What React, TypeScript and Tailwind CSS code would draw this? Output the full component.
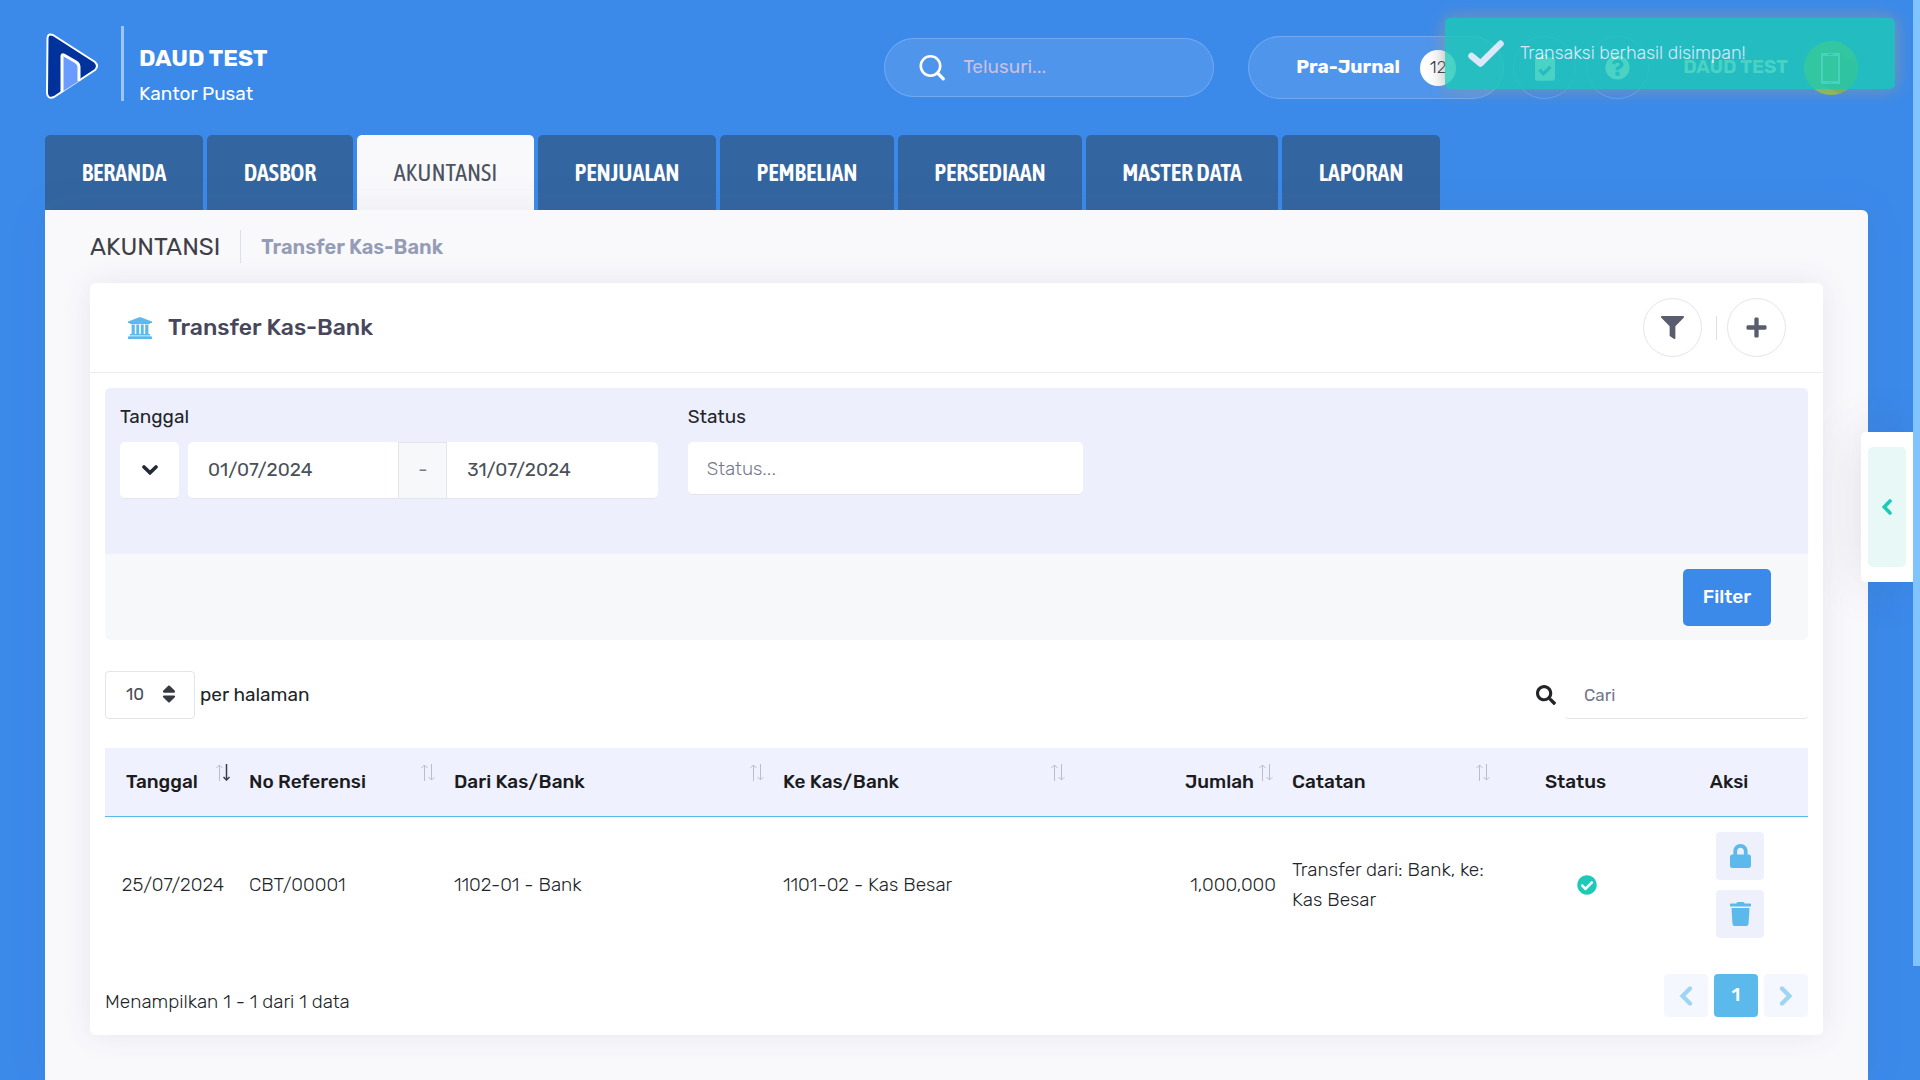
import React from "react";
import {
  FaCheckCircle,
  FaClipboardCheck,
  FaFilter,
  FaLock,
  FaPlus,
  FaQuestionCircle,
  FaSearch,
  FaSort,
  FaTrash,
} from "react-icons/fa";

const tabs = [
  { label: "BERANDA", width: "w-[158px]" },
  { label: "DASBOR", width: "w-[146px]" },
  { label: "AKUNTANSI", width: "w-[177px]", active: true },
  { label: "PENJUALAN", width: "w-[178px]" },
  { label: "PEMBELIAN", width: "w-[174px]" },
  { label: "PERSEDIAAN", width: "w-[184px]" },
  { label: "MASTER DATA", width: "w-[192px]" },
  { label: "LAPORAN", width: "w-[158px]" },
];

type Column = {
  label: string;
  width: string;
  align: string;
  sort?: "none" | "desc";
};

const columns: Column[] = [
  { label: "Tanggal", width: "w-[136px]", align: "text-center", sort: "desc" },
  { label: "No Referensi", width: "w-[205px]", align: "text-left", sort: "none" },
  { label: "Dari Kas/Bank", width: "w-[329px]", align: "text-left", sort: "none" },
  { label: "Ke Kas/Bank", width: "w-[301px]", align: "text-left", sort: "none" },
  { label: "Jumlah", width: "w-[208px]", align: "text-right", sort: "none" },
  { label: "Catatan", width: "w-[217px]", align: "text-left", sort: "none" },
  { label: "Status", width: "w-[171px]", align: "text-center" },
  { label: "Aksi", width: "w-[136px]", align: "text-center" },
];

function Logo() {
  return (
    <svg viewBox="0 0 54 68" className="mb-1 h-[68px] w-[54px]" aria-hidden="true">
      <path
        d="M2.500 6 Q3 1 8 3 L50 30 Q54 34 50 38 L9 65 Q2.500 67.500 2 61 Z"
        fill="#00329b"
        stroke="#fff"
        strokeWidth="2"
        strokeLinejoin="round"
      />
      <path d="M17 24 Q17 22 19 23 L31 30 Q34 32 34 35 L34 49 L17 60 Z" fill="#6a9bff" />
      <path
        d="M17 60 L17 24 Q17 22 19 23 L31 30 Q34 32 34 35 L34 49"
        fill="none"
        stroke="#fff"
        strokeWidth="3"
      />
    </svg>
  );
}

function SearchGlyph() {
  return (
    <svg viewBox="0 0 26 26" className="h-[26px] w-[26px]" fill="none" stroke="#fff" aria-hidden="true">
      <circle cx="11.5" cy="11" r="9.7" strokeWidth="2.6" />
      <path d="M18.5 18 L24.3 23.800" strokeWidth="3.2" strokeLinecap="round" />
    </svg>
  );
}

function BankGlyph() {
  return (
    <svg viewBox="0 0 24 22" className="h-[22px] w-6 text-[#5bb9ec]" fill="currentColor" aria-hidden="true">
      <path d="M12 0 L24 4.600 V6 H22.400 L21.800 7 H2.200 L1.600 6 H0 V4.600 Z" />
      <path d="M3.600 7.500 H6.800 V17 H3.600 Z M8.300 7.500 H11.200 V17 H8.300 Z M12.800 7.500 H15.700 V17 H12.800 Z M17.200 7.500 H20.400 V17 H17.200 Z" />
      <path d="M2.200 17 H21.800 L22.400 18.500 H1.600 Z M0.800 19.200 H23.200 L24 20 V22 H0 V20 Z" />
    </svg>
  );
}

function PhoneAvatar() {
  return (
    <svg viewBox="0 0 54 54" className="h-[54px] w-[54px]" aria-hidden="true">
      <clipPath id="avatar-clip">
        <circle cx="27" cy="27" r="27" />
      </clipPath>
      <g clipPath="url(#avatar-clip)">
        <rect width="54" height="54" fill="#8bc34a" />
        <path d="M36 12 L54 22 V54 H38 L17 43 Z" fill="#7cb342" />
      </g>
      <rect x="17" y="12" width="19" height="31" fill="#f1f8e9" />
      <rect x="19" y="15" width="15" height="25" fill="#8bc34a" />
      <path d="M24 13.5 H29" stroke="#689f38" strokeWidth="1" />
      <circle cx="26.500" cy="41.500" r="0.800" fill="#689f38" />
    </svg>
  );
}

function ToastCheck() {
  return (
    <svg viewBox="0 0 36 28" className="h-7 w-9 shrink-0" fill="none" stroke="#fff" aria-hidden="true">
      <path d="M3.500 16 L12.500 23.500 L32.500 3.800" strokeWidth="6.500" strokeLinecap="round" strokeLinejoin="round" />
    </svg>
  );
}

function DownGlyph() {
  return (
    <svg viewBox="0 0 16 10" className="h-[10px] w-4" fill="none" stroke="#242939" aria-hidden="true">
      <path d="M2 2 L8 7.800 L14 2" strokeWidth="3.600" strokeLinecap="round" />
    </svg>
  );
}

function PageChevron({ next }: { next?: boolean }) {
  return (
    <svg viewBox="0 0 14 20" className="h-5 w-[14px]" fill="none" stroke="currentColor" aria-hidden="true">
      <path d={next ? "M3 2.500 L10.500 10 L3 17.500" : "M11 2.500 L3.500 10 L11 17.500"} strokeWidth="4.200" strokeLinecap="round" />
    </svg>
  );
}

function SortArrows({ desc }: { desc: boolean }) {
  return (
    <svg viewBox="0 0 14 17" className="absolute top-4 right-[11px] h-[17px] w-[14px]" fill="none" aria-hidden="true">
      <g stroke="#bcbdc9">
        <path d="M3.500 1 V17" />
        <path d="M0.500 4 L3.500 1 L6.500 4" />
      </g>
      <g stroke={desc ? "#3b3c45" : "#bcbdc9"}>
        <path d="M10.500 0 V16" strokeWidth={desc ? 1.5 : 1} />
        <path d="M7.500 13 L10.500 16 L13.500 13" strokeWidth={desc ? 1.5 : 1} />
      </g>
    </svg>
  );
}

function Header() {
  return (
    <header className="flex h-[135px] items-center pr-[62px] pl-[45px] text-white">
      <Logo />
      <div className="mt-[26px] ml-[22px] h-[75px] w-[3px] self-start bg-white/50" />
      <div className="ml-[15px] flex flex-col gap-2 pt-4">
        <div className="text-[23px] leading-7 font-bold">DAUD TEST</div>
        <div className="text-[19px] leading-7">Kantor Pusat</div>
      </div>
      <label className="ml-auto flex h-[59px] w-[330px] items-center gap-[18px] rounded-full border border-white/20 bg-white/10 pl-[34px]">
        <SearchGlyph />
        <input
          aria-label="Telusuri"
          placeholder="Telusuri..."
          className="w-56 bg-transparent text-[19px] text-white outline-none placeholder:text-[#c9bfe3]"
        />
      </label>
      <button className="ml-[34px] flex h-[63px] w-[256px] items-center gap-5 rounded-full border border-white/20 bg-white/10 pl-[47px] text-[19px] font-bold">
        Pra-Jurnal
        <span className="flex h-9 w-9 items-center justify-center rounded-full bg-white text-[17px] font-light text-[#242939]">12</span>
      </button>
      <button aria-label="Tugas" className="ml-[9px] flex h-[63px] w-[63px] items-center justify-center rounded-full border border-white/20">
        <FaClipboardCheck className="h-[27px] w-5" />
      </button>
      <button aria-label="Bantuan" className="ml-[10px] flex h-[63px] w-[63px] items-center justify-center rounded-full border border-white/20">
        <FaQuestionCircle className="h-[25px] w-[25px]" />
      </button>
      <span className="ml-[34px] text-[19px] font-semibold">DAUD TEST</span>
      <button aria-label="Profil" className="ml-4">
        <PhoneAvatar />
      </button>
    </header>
  );
}

function Tabs() {
  return (
    <nav className="flex gap-1 pl-[45px] font-['Asap_Condensed','Open_Sans_Condensed','Roboto_Condensed',sans-serif] text-[24px]">
      {tabs.map((t) => (
        <a
          key={t.label}
          href="#"
          className={`${t.width} ${
            t.active ? "bg-[#f9f9fc] font-normal text-[#4d5360]" : "bg-[#3366a1] font-semibold text-white"
          } flex h-[75px] items-center justify-center rounded-t-[5px] whitespace-nowrap`}
        >
          {t.label}
        </a>
      ))}
    </nav>
  );
}

function FilterPanel() {
  const field =
    "bg-white border-b border-[#e2e5ec] text-[19px] text-[#495057] outline-none placeholder:font-light placeholder:text-[#74788d]";
  return (
    <form className="overflow-hidden rounded-[5px]" onSubmit={(e) => e.preventDefault()}>
      <div className="flex h-[166px] bg-[#edeffd] pt-[15px]">
        <fieldset className="w-1/3 min-w-0 px-[15px]">
          <legend className="mb-[11px] text-[19px] leading-7">Tanggal</legend>
          <div className="flex h-[57px]">
            <button aria-label="Pilih rentang" className="mr-[9px] flex w-[59px] shrink-0 items-center justify-center rounded-[5px] border-b border-[#e2e5ec] bg-white">
              <DownGlyph />
            </button>
            <input aria-label="Tanggal awal" defaultValue="01/07/2024" className={`${field} min-w-0 flex-1 rounded-l-[5px] px-5`} />
            <span className="flex w-[49px] shrink-0 items-center justify-center border border-[#e2e5ec] bg-[#f7f8fa] text-[19px] text-[#74788d]">-</span>
            <input aria-label="Tanggal akhir" defaultValue="31/07/2024" className={`${field} min-w-0 flex-1 rounded-r-[5px] px-5`} />
          </div>
        </fieldset>
        <div className="flex w-1/4 flex-col gap-[11px] px-[15px] text-[19px]">
          <label htmlFor="status" className="leading-7">Status</label>
          <input id="status" placeholder="Status..." className={`${field} h-[53px] w-full rounded-[5px] px-[19px]`} />
        </div>
      </div>
      <div className="flex h-[86px] items-center justify-end bg-[#f7f8fa] pr-[37px]">
        <button className="h-[57px] w-[88px] rounded-[5px] bg-[#3b8aea] text-[19px] font-medium text-white">Filter</button>
      </div>
    </form>
  );
}

function TransferTable() {
  return (
    <table className="mt-[29px] w-full table-fixed border-separate border-spacing-0 text-[19px] leading-[30px]">
      <thead>
        <tr>
          {columns.map((c) => (
            <th
              key={c.label}
              className={`${c.width} ${c.align} relative h-[69px] border-b border-[#5bb9ec] bg-[#eff1ff] pr-[30px] pl-2 font-medium whitespace-nowrap text-[#1c1c20]`}
            >
              {c.label}
              {c.sort && <SortArrows desc={c.sort === "desc"} />}
            </th>
          ))}
        </tr>
      </thead>
      <tbody>
        <tr className="h-[135px] font-light text-[#212529]">
          <td className="text-center">25/07/2024</td>
          <td className="px-2">CBT/00001</td>
          <td className="px-2">1102-01 - Bank</td>
          <td className="px-2">1101-02 - Kas Besar</td>
          <td className="px-2 text-right">1,000,000</td>
          <td className="px-2">Transfer dari: Bank, ke: Kas Besar</td>
          <td>
            <FaCheckCircle className="mx-auto h-5 w-5 text-[#1dc9b7]" />
          </td>
          <td>
            <div className="flex flex-col items-center gap-[10px] text-[#5bb9ec]">
              <button aria-label="Kunci" className="flex h-12 w-12 items-center justify-center rounded-[4px] bg-[#eef0fc]">
                <FaLock className="h-6 w-[21px]" />
              </button>
              <button aria-label="Hapus" className="flex h-12 w-12 items-center justify-center rounded-[4px] bg-[#eef0fc]">
                <FaTrash className="h-6 w-[21px]" />
              </button>
            </div>
          </td>
        </tr>
      </tbody>
    </table>
  );
}

function Card() {
  return (
    <section className="rounded-[6px] bg-white shadow-[0_0_30px_0_rgba(82,63,105,0.1)]">
      <div className="flex h-[90px] items-center border-b border-[#ebedf2] pr-[37px] pl-[38px] text-[#595d6e]">
        <BankGlyph />
        <h3 className="ml-4 text-[23px] font-medium text-[#48465b]">Transfer Kas-Bank</h3>
        <button aria-label="Filter" className="ml-auto flex h-[59px] w-[59px] items-center justify-center rounded-full border border-[#e2e5ec]">
          <FaFilter className="h-[23px] w-[23px]" />
        </button>
        <span className="mr-[10px] ml-[14px] h-6 w-px bg-[#dcdfe8]" />
        <button aria-label="Tambah" className="flex h-[59px] w-[59px] items-center justify-center rounded-full border border-[#e2e5ec]">
          <FaPlus className="h-[23px] w-[23px]" />
        </button>
      </div>
      <div className="px-[15px] pt-[15px] pb-[18px]">
        <FilterPanel />
        <div className="mt-[31px] flex h-12 items-center text-[19px]">
          <label className="flex items-center gap-[5px]">
            <span className="relative">
              <select className="h-12 w-[90px] appearance-none rounded-[4px] border border-[#e2e5ec] bg-white pl-5 text-[17px] text-[#495057]">
                <option>10</option>
              </select>
              <FaSort className="pointer-events-none absolute top-3 right-4 h-[22px] w-[20px] text-[#343a40]" />
            </span>
            per halaman
          </label>
          <label className="ml-auto flex items-center gap-[9px]">
            <FaSearch className="h-5 w-5" />
            <input
              aria-label="Cari"
              placeholder="Cari"
              className="h-12 w-[243px] rounded-[4px] border-b border-[#e2e5ec] px-[19px] text-[17px] outline-none placeholder:text-[#74788d]"
            />
          </label>
        </div>
        <TransferTable />
        <div className="mt-[22px] flex items-center justify-between">
          <p className="pt-3 text-[19px] leading-7 font-light">Menampilkan 1 - 1 dari 1 data</p>
          <div className="flex gap-[6px] text-[#9dd5f3]">
            <button aria-label="Sebelumnya" className="flex h-[43px] w-11 items-center justify-center rounded-[4px] bg-[#f4f7fe]">
              <PageChevron />
            </button>
            <button className="h-[43px] w-11 rounded-[4px] bg-[#5bb9ec] text-[19px] font-medium text-white">1</button>
            <button aria-label="Berikutnya" className="flex h-[43px] w-11 items-center justify-center rounded-[4px] bg-[#f4f7fe]">
              <PageChevron next />
            </button>
          </div>
        </div>
      </div>
    </section>
  );
}

export default function App() {
  return (
    <div className="relative flex min-h-screen flex-col overflow-hidden bg-[#3b8aea] font-[Rubik,Inter,sans-serif] text-[#212529]">
      <Header />
      <Tabs />
      <main className="mr-[52px] ml-[45px] flex-1 rounded-tr-[6px] bg-[#f9f9fc] px-[45px] pb-[45px] shadow-[0_0_40px_0_rgba(82,63,105,0.08)]">
        <div className="flex h-[73px] items-center">
          <h2 className="text-[24px] font-normal text-[#3f4047]">AKUNTANSI</h2>
          <span className="mx-5 h-[33px] w-px bg-[#dcdfee]" />
          <a href="#" className="text-[20px] font-semibold text-[#959cb6]">Transfer Kas-Bank</a>
        </div>
        <Card />
      </main>

      <div className="absolute top-[432px] right-[7px] flex h-[150px] w-[52px] items-center rounded-l-[5px] bg-white pl-[7px] shadow-[0_0_50px_0_rgba(82,63,105,0.15)]">
        <button aria-label="Buka panel" className="flex h-[120px] w-[38px] items-center justify-center rounded-[5px] bg-[#e7f8f6]">
          <svg viewBox="0 0 10 16" className="h-4 w-[10px]" fill="none" stroke="#1dc9b7" aria-hidden="true">
            <path d="M8 2 L2.300 8 L8 14" strokeWidth="3.600" strokeLinecap="round" />
          </svg>
        </button>
      </div>

      <div className="absolute top-0 right-0 h-[966px] w-[7px] bg-[#7fc3ff]" />

      <div
        role="status"
        className="absolute top-[18px] right-[25px] flex h-[71px] w-[450px] items-center gap-4 rounded-[5px] bg-[#1dc9b7] pl-[23px] text-[18px] font-light text-white opacity-80 shadow-[0_0_18px_#999]"
      >
        <ToastCheck />
        Transaksi berhasil disimpan!
      </div>
    </div>
  );
}
